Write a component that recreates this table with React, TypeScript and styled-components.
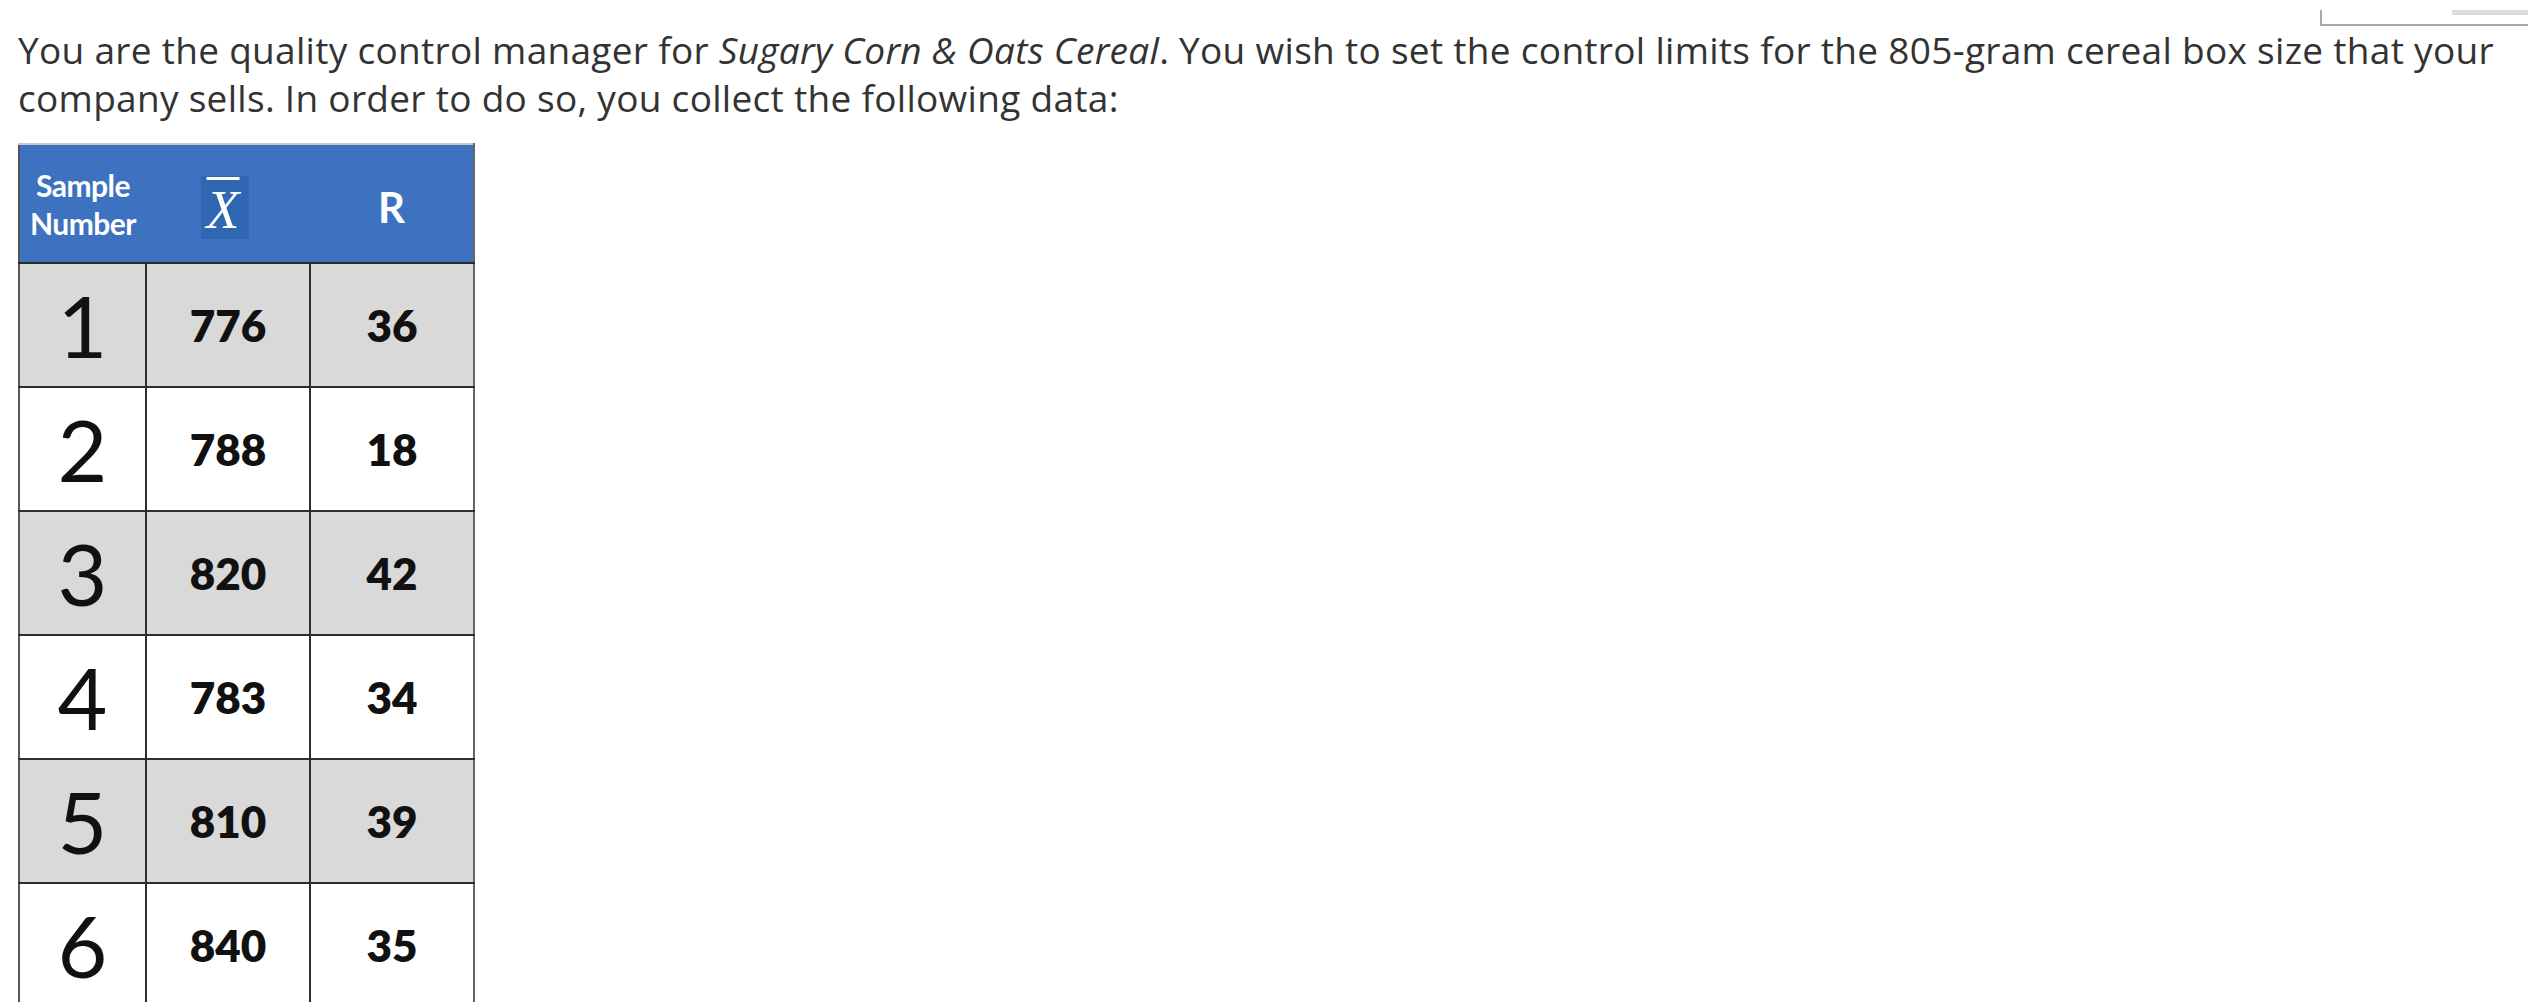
import React from 'react';
import styled, { createGlobalStyle } from 'styled-components';

const GlobalStyle = createGlobalStyle`
  html, body {
    margin: 0;
    padding: 0;
    background: #ffffff;
  }
  body {
    font-family: "Open Sans", "Liberation Sans", sans-serif;
    overflow: hidden;
  }
`;

const Page = styled.div`
  position: relative;
  width: 2528px;
  height: 1002px;
  padding: 26px 0 0 18px;
  box-sizing: border-box;
  overflow: hidden;
`;

const WindowEdge = styled.div`
  position: absolute;
  top: 10px;
  left: 2320px;
  right: 0;
  height: 14px;
  border-left: 2px solid #a8a8a8;
  border-bottom: 2px solid #a8a8a8;
`;

const EdgeBar = styled.div`
  position: absolute;
  top: 0;
  right: 0;
  width: 76px;
  height: 5px;
  background: #dcdcdc;
`;

const Intro = styled.p`
  margin: 0;
  font-size: 37px;
  line-height: 48px;
  color: #333333;
  letter-spacing: 0.3px;
  white-space: nowrap;
`;

const DataTable = styled.table`
  margin-top: 21px;
  border-collapse: collapse;
  table-layout: fixed;
  width: 453px;
  font-family: Lato, "Open Sans", sans-serif;
`;

const HeadCell = styled.th<{ $w: number }>`
  width: ${(p) => p.$w}px;
  height: 117px;
  padding: 0;
  background: #3d72c0;
  color: #ffffff;
  font-weight: 700;
  text-align: center;
  vertical-align: middle;
  border-top: 2px solid #c9c9c9;
  border-bottom: 2px solid #2a2a2a;
  &:first-child {
    border-left: 2px solid #555;
  }
  &:last-child {
    border-right: 2px solid #666;
  }
`;

const SampleLabel = styled.div`
  font-size: 30px;
  line-height: 38px;
  letter-spacing: -0.5px;
`;

const XBarBox = styled.span`
  display: inline-flex;
  align-items: flex-end;
  justify-content: center;
  width: 48px;
  height: 63px;
  background: #2f67b2;
  margin-left: -6px;
  margin-top: 8px;
`;

const XBar = styled.span`
  font-family: "Liberation Serif", "DejaVu Serif", serif;
  font-style: italic;
  font-weight: 400;
  font-size: 54px;
  line-height: 58px;
  text-decoration: overline;
  text-decoration-thickness: 3px;
  padding-right: 4px;
`;

const RLabel = styled.span`
  display: inline-block;
  font-size: 42px;
  margin-top: 6px;
`;

const Row = styled.tr<{ $shade: boolean }>`
  background: ${(p) => (p.$shade ? '#d9d9d9' : '#ffffff')};
`;

const Cell = styled.td`
  height: 122px;
  padding: 0;
  text-align: center;
  vertical-align: middle;
  color: #111111;
  border: 2px solid #2e2e2e;
  &:first-child {
    border-left: 2px solid #555;
  }
  &:last-child {
    border-right: 2px solid #666;
  }
`;

const SampleNo = styled.span`
  font-size: 86px;
  font-weight: 400;
  line-height: 1;
`;

const Value = styled.span`
  font-size: 44px;
  font-weight: 800;
`;

const rows = [
  { n: 1, x: 776, r: 36 },
  { n: 2, x: 788, r: 18 },
  { n: 3, x: 820, r: 42 },
  { n: 4, x: 783, r: 34 },
  { n: 5, x: 810, r: 39 },
  { n: 6, x: 840, r: 35 },
];

export default function App() {
  return (
    <>
      <GlobalStyle />
      <Page>
        <WindowEdge>
          <EdgeBar />
        </WindowEdge>
        <Intro>
          You are the quality control manager for <i>Sugary Corn &amp; Oats Cereal</i>. You wish to set the
          control limits for the 805-gram cereal box size that your
          <br />
          company sells. In order to do so, you collect the following data:
        </Intro>
        <DataTable>
          <thead>
            <tr>
              <HeadCell $w={126}>
                <SampleLabel>
                  Sample
                  <br />
                  Number
                </SampleLabel>
              </HeadCell>
              <HeadCell $w={164}>
                <XBarBox>
                  <XBar>X</XBar>
                </XBarBox>
              </HeadCell>
              <HeadCell $w={163}>
                <RLabel>R</RLabel>
              </HeadCell>
            </tr>
          </thead>
          <tbody>
            {rows.map((row) => (
              <Row key={row.n} $shade={row.n % 2 === 1}>
                <Cell>
                  <SampleNo>{row.n}</SampleNo>
                </Cell>
                <Cell>
                  <Value>{row.x}</Value>
                </Cell>
                <Cell>
                  <Value>{row.r}</Value>
                </Cell>
              </Row>
            ))}
          </tbody>
        </DataTable>
      </Page>
    </>
  );
}
